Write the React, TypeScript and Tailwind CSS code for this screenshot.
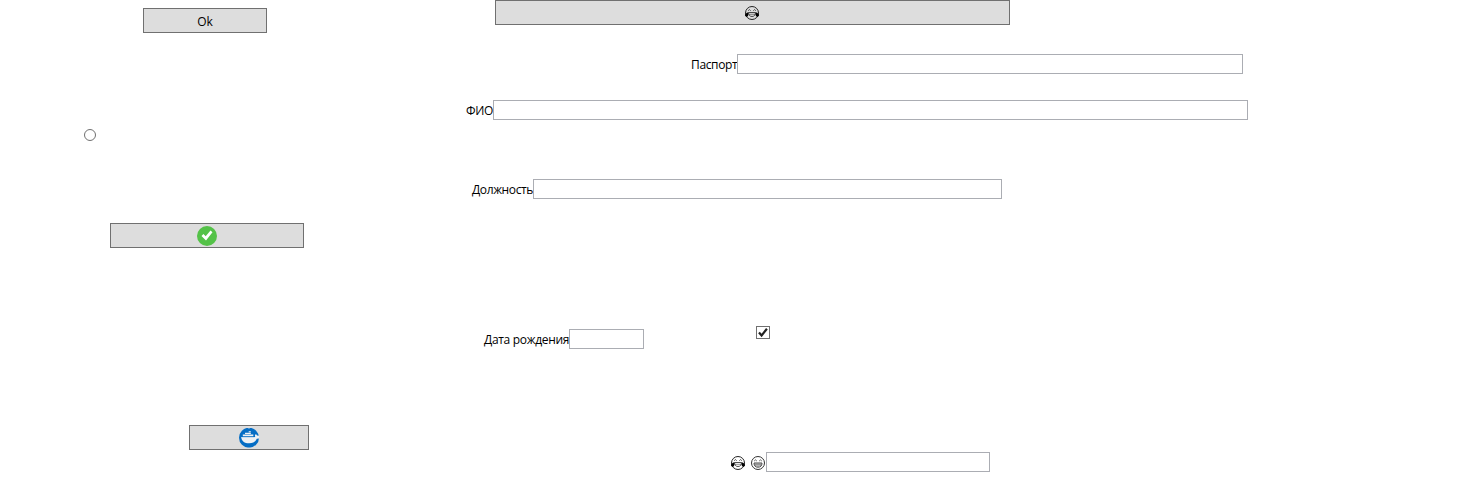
import type { ReactNode } from 'react';

function Button({ className, children }: { className: string; children: ReactNode }) {
  return (
    <button type="button" className={`flex h-[25px] shrink-0 items-center justify-center border border-[#707070] bg-[#dddddd] ${className}`}>
      {children}
    </button>
  );
}

function Field({ label, row, text, input }: { label: ReactNode; row: string; text: string; input: string }) {
  return (
    <label className={`flex h-5 shrink-0 ${row}`}>
      <span className={`flex h-5 shrink-0 items-center whitespace-nowrap pt-0.5 ${text}`}>{label}</span>
      <input type="text" className={`h-5 shrink-0 border border-[#abadb3] bg-white px-1 outline-none ${input}`} />
    </label>
  );
}

function JoyFace() {
  return (
    <svg width="16" height="16" viewBox="0 0 16 16" fill="none" stroke="#222" className="shrink-0">
      <circle cx="8" cy="8" r="6.5" strokeWidth="1" />
      <path d="M4.200 5.700 5.400 4.600 6.700 5.700M9.300 5.700l1.300-1.100 1.200 1.100" strokeWidth="0.8" />
      <path d="M4.500 7.500h7c0 2.600-1.300 4-3.500 4s-3.500-1.400-3.500-4z" strokeWidth="0.8" />
      <path d="M4.800 9.300h6.400" strokeWidth="0.5" />
      <path d="M4.200 7.200C2.500 7.700 1 8.900 1 10.200c0 1.500 2.400 2 3.100.6.400-.9.300-2.200.1-3.600zM11.800 7.200c1.700.5 3.200 1.700 3.200 3 0 1.500-2.400 2-3.100.6-.4-.9-.3-2.200-.1-3.600z" fill="#000" stroke="none" />
    </svg>
  );
}

function GrinFace() {
  return (
    <svg width="16" height="16" viewBox="0 0 16 16" fill="none" stroke="#333" className="shrink-0">
      <circle cx="8" cy="8" r="6.5" strokeWidth="1" />
      <path d="M4.200 6 5.500 4.900 6.800 6M9.200 6l1.300-1.100L11.800 6" strokeWidth="0.8" />
      <path d="M4 8h8c0 2.700-1.500 4.200-4 4.200S4 10.700 4 8z" strokeWidth="0.9" />
      <path d="M4.300 9.800h7.400M6 8.200v3.200M8 8.200v3.800M10 8.200v3.200" strokeWidth="0.5" />
    </svg>
  );
}

function SuccessIcon() {
  return (
    <svg width="20" height="20" viewBox="0 0 20 20">
      <circle cx="10" cy="10" r="10" fill="#54c248" />
      <path d="m4.500 9.900 1.900-1.900 2.300 2.200L13.500 4.500l2 1.800-6.500 8.200z" fill="#fff" />
    </svg>
  );
}

function DockerIcon() {
  return (
    <svg width="20" height="20" viewBox="0 0 20 20">
      <circle cx="10" cy="9.700" r="10" fill="#056dc4" />
      <path d="M2.200 8.900h14l-.3-1.600 1-1.300 1.200 1.500 1.900.3v2.800l-2.200.1c-1.400 3.200-3.700 4.500-7.600 4.500-4.700 0-7.700-2.200-8-6.300z" fill="#eef1f4" />
      <path d="M3.800 6.500h10.500v1.900H3.800zM6 4.700h5.800v1.300H6zM9.700 3.200h2.100v1H9.700z" fill="#eef1f4" />
      <path d="M3 8.700h12.500" stroke="#056dc4" strokeWidth=".7" />
      <path d="M9.200 0h1.600v.8H9.200zM9.200 19h1.600v.8H9.200z" fill="#79b4df" />
    </svg>
  );
}

export default function App() {
  return (
    <main className="flex h-[491px] w-[1477px] overflow-hidden bg-white font-['Open_Sans','Noto_Sans',sans-serif] text-[12px] leading-4 text-black">
      <section className="flex w-[440px] shrink-0 flex-col items-start pt-2">
        <Button className="ml-[143px] w-[124px] pt-0.5">Ok</Button>
        <input type="radio" aria-label="Ok" className="ml-[84px] mt-24 size-3 shrink-0 appearance-none rounded-full border border-[#707070] bg-white" />
        <Button className="ml-[110px] mt-[82px] w-[194px]"><SuccessIcon /></Button>
        <Button className="ml-[189px] mt-[177px] w-[120px]"><DockerIcon /></Button>
      </section>

      <section className="flex grow flex-col items-start">
        <Button className="ml-[55px] w-[515px] pr-px"><JoyFace /></Button>
        <Field label="Паспорт" row="ml-[251px] mt-[29px]" text="w-[46px] tracking-[-0.35px]" input="w-[506px]" />
        <Field label="ФИО" row="ml-[26px] mt-[26px]" text="w-[27px] tracking-[-0.4px]" input="w-[755px]" />
        <Field label="Должность" row="ml-8 mt-[59px]" text="w-[61px] tracking-[-0.38px]" input="w-[469px]" />
        <div className="mt-[127px] flex h-[23px] shrink-0 items-start">
          <Field label="Дата рождения" row="ml-11 mt-[3px]" text="w-[85px] tracking-[-0.31px]" input="w-[75px]" />
          <span role="checkbox" aria-checked="true" className="ml-28 flex h-[13px] w-3.5 items-center justify-center border border-[#707070] bg-white">
            <svg width="12" height="11" viewBox="0 0 12 11" fill="none" stroke="#212121" strokeWidth="2.2">
              <path d="m2 5.500 2.600 3L9.900 1.800" />
            </svg>
          </span>
        </div>
        <Field
          label={<span className="flex gap-1"><JoyFace /><GrinFace /></span>}
          row="ml-[290px] mt-[103px]"
          text="w-9"
          input="w-56"
        />
      </section>
    </main>
  );
}
